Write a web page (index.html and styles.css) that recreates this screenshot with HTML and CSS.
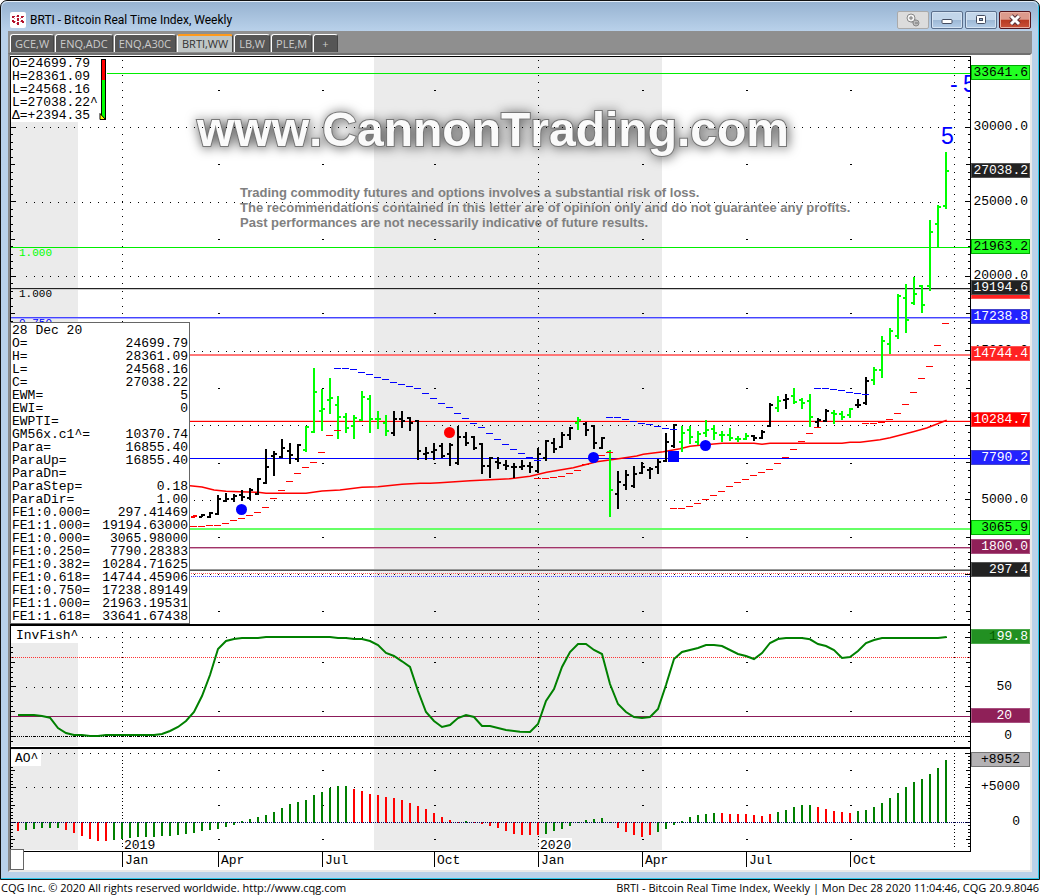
FILE: index.html
```html
<!DOCTYPE html>
<html lang="en">
<head>
<meta charset="utf-8">
<title>BRTI - Bitcoin Real Time Index, Weekly</title>
<link rel="stylesheet" href="styles.css">
</head>
<body>
<main class="window">
  <header class="titlebar">
    <svg class="logo" width="16" height="16" viewBox="0 0 16 16" aria-hidden="true">
      <rect width="16" height="16" rx="2" fill="#fff"/>
      <path fill="#b3122b" d="M2 4h3v1H4v1H2zM7 3h2v2H7zM11 4h3v1h-1v1h-2zM2 8h2v1h1v2H3v-1H2zM7 6h2v3H7zM11 8h2v1h1v2h-2v-1h-1zM7 10h2v3H7z"/>
      <path fill="#e58a98" d="M4 6h1v1H4zM6 4h1v1H6zM10 6h1v1h-1zM5 9h1v1H5zM10 9h1v1h-1zM6 11h1v1H6z"/>
    </svg>
    <h1 class="title">BRTI - Bitcoin Real Time Index, Weekly</h1>
    <div class="controls">
      <button class="ctl ctl-link" type="button" aria-label="Link windows">
        <svg width="16" height="14" viewBox="0 0 16 14"><path d="M6 3l7 5-3 4-6-4z" fill="#aaa"/><circle cx="11" cy="10" r="3" fill="#bbb" stroke="#888"/><circle cx="6" cy="5" r="4" fill="#f4f4f4" stroke="#888"/><path d="M4 5h4M6 3v4M10 10h3" stroke="#777"/></svg>
      </button>
      <button class="ctl" type="button" aria-label="Minimize">
        <svg width="14" height="12" viewBox="0 0 14 12"><rect x="2" y="5.500" width="10" height="4" rx="1" fill="#fff" stroke="#444c60"/></svg>
      </button>
      <button class="ctl" type="button" aria-label="Maximize">
        <svg width="14" height="12" viewBox="0 0 14 12"><rect x="2.500" y="1.500" width="9" height="8" rx="1" fill="#fff" stroke="#444c60"/><rect x="5.500" y="4.500" width="3" height="2" fill="#8fb0d0" stroke="#444c60"/></svg>
      </button>
      <button class="ctl ctl-close" type="button" aria-label="Close">
        <svg width="14" height="12" viewBox="0 0 14 12"><path d="M3 2l8 8M11 2l-8 8" stroke="#5a3038" stroke-width="5"/><path d="M3 2l8 8M11 2l-8 8" stroke="#fff" stroke-width="3"/></svg>
      </button>
    </div>
  </header>

  <nav class="tabs" aria-label="Charts">
    <button class="tab" type="button">GCE,W</button>
    <button class="tab" type="button">ENQ,ADC</button>
    <button class="tab" type="button">ENQ,A30C</button>
    <button class="tab tab-active" type="button" aria-current="page">BRTI,WW</button>
    <button class="tab" type="button">LB,W</button>
    <button class="tab" type="button">PLE,M</button>
    <button class="tab tab-add" type="button" aria-label="Add chart">+</button>
  </nav>

  <div class="charts">
    <section class="pane">
      <svg class="plot" viewBox="10 55 1020 571" role="img" aria-label="Weekly price chart">
        <defs>
          <clipPath id="plot-clip"><rect x="10" y="55" width="960" height="571"/></clipPath>
        </defs>
        <rect class="band" x="11" y="122" width="67" height="502"/>
        <rect class="band" x="374" y="57" width="288" height="567"/>
        <text class="brand" x="197" y="146">www.CannonTrading.com</text>
        <text class="notice" x="240" y="197">Trading commodity futures and options involves a substantial risk of loss.</text>
        <text class="notice" x="240" y="212">The recommendations contained in this letter are of opinion only and do not guarantee any profits.</text>
        <text class="notice" x="240" y="227">Past performances are not necessarily indicative of future results.</text>
        <g id="price-grid" class="crisp"></g>
        <g id="price-levels" class="crisp"></g>
        <polyline id="average" class="average"/>
        <g id="price-bars" class="crisp"></g>
        <g id="parabolic" class="crisp"></g>
        <circle cx="241.500" cy="509.500" r="5.500" fill="#00f"/>
        <circle cx="449.500" cy="432.500" r="5.500" fill="#f00"/>
        <circle cx="593.500" cy="457.500" r="5.500" fill="#00f"/>
        <circle cx="705.500" cy="445.500" r="5.500" fill="#00f"/>
        <rect x="668" y="451" width="11" height="11" fill="#00f"/>
        <g class="level-label">
          <text x="19" y="256" fill="#0f0">1.000</text>
          <text x="19" y="297">1.000</text>
          <text x="19" y="326" fill="#00f">0.750</text>
        </g>
        <g class="wave" clip-path="url(#plot-clip)">
          <text x="941" y="144">5</text>
          <text x="950" y="92">-</text>
          <text x="963" y="92">5</text>
        </g>
        <path class="frame" d="M10 56h961v1H10zM10 56h1v570h-1zM970 56h1v570h-1zM10 624h960v2H10z"/>
        <g id="price-tags"></g>
      </svg>
      <div class="readout">
        <div>O=24699.79</div>
        <div>H=28361.09</div>
        <div>L=24568.16</div>
        <div>L=27038.22^</div>
        <div>Δ=+2394.35</div>
        <svg class="range" width="8" height="62" viewBox="0 0 8 62" aria-hidden="true">
          <path fill="#000" d="M2 0h5v61H2z"/><path fill="#f00" d="M3 1h3v20H3z"/><path fill="#0f0" d="M3 21h3v39H3z"/>
          <path fill="#ff0" stroke="#000" d="M1 54.500v6h5.500z"/>
        </svg>
      </div>
      <table class="values" aria-label="Cursor values">
        <tbody>
          <tr><th colspan="2">28 Dec 20</th></tr>
          <tr><th>O=</th><td>24699.79</td></tr>
          <tr><th>H=</th><td>28361.09</td></tr>
          <tr><th>L=</th><td>24568.16</td></tr>
          <tr><th>C=</th><td>27038.22</td></tr>
          <tr><th>EWM=</th><td>5</td></tr>
          <tr><th>EWI=</th><td>0</td></tr>
          <tr><th>EWPTI=</th><td></td></tr>
          <tr><th>GM56x.c1^=</th><td>10370.74</td></tr>
          <tr><th>Para=</th><td>16855.40</td></tr>
          <tr><th>ParaUp=</th><td>16855.40</td></tr>
          <tr><th>ParaDn=</th><td></td></tr>
          <tr><th>ParaStep=</th><td>0.18</td></tr>
          <tr><th>ParaDir=</th><td>1.00</td></tr>
          <tr><th>FE1:0.000=</th><td>297.41469</td></tr>
          <tr><th>FE1:1.000=</th><td>19194.63000</td></tr>
          <tr><th>FE1:0.000=</th><td>3065.98000</td></tr>
          <tr><th>FE1:0.250=</th><td>7790.28383</td></tr>
          <tr><th>FE1:0.382=</th><td>10284.71625</td></tr>
          <tr><th>FE1:0.618=</th><td>14744.45906</td></tr>
          <tr><th>FE1:0.750=</th><td>17238.89149</td></tr>
          <tr><th>FE1:1.000=</th><td>21963.19531</td></tr>
          <tr><th>FE1:1.618=</th><td>33641.67438</td></tr>
        </tbody>
      </table>
    </section>

    <section class="pane">
      <svg class="plot" viewBox="10 626 1020 123" role="img" aria-label="InvFish oscillator">
        <rect class="band" x="11" y="643" width="67" height="103"/>
        <rect class="band" x="374" y="626" width="288" height="120"/>
        <g id="fish-grid" class="crisp"></g>
        <path class="dotted" stroke="#f33" d="M11 657.500H970"/>
        <path class="dotted" stroke="#000" d="M11 736.500H970"/>
        <path class="crisp" stroke="#8b1a5a" d="M11 716.500H970"/>
        <polyline id="fish-line" class="fish"/>
        <rect x="11" y="627" width="70" height="16" fill="#fff"/>
        <text class="mono" x="16" y="639">InvFish^</text>
        <path class="frame" d="M10 626h1v123h-1zM970 626h1v123h-1zM10 747h960v2H10z"/>
        <g id="fish-tags"></g>
      </svg>
    </section>

    <section class="pane">
      <svg class="plot" viewBox="10 749 1020 121" role="img" aria-label="Awesome oscillator">
        <rect class="band" x="11" y="749" width="67" height="101"/>
        <rect class="band" x="374" y="749" width="288" height="101"/>
        <g id="ao-grid" class="crisp"></g>
        <g id="ao-bars" class="crisp"></g>
        <path class="dotted" stroke="#000060" d="M11 822.500H970"/>
        <rect x="11" y="750" width="30" height="16" fill="#fff"/>
        <text class="mono" x="15" y="762">AO^</text>
        <rect x="123" y="838" width="33" height="12" fill="#fff"/>
        <rect x="539" y="838" width="33" height="12" fill="#fff"/>
        <text class="mono" x="124" y="849">2019</text>
        <text class="mono" x="540" y="849">2020</text>
        <path class="frame" d="M10 749h1v118h-1zM970 749h1v103h-1zM10 851h961v1H10z"/>
        <g id="time-axis"></g>
        <rect x="10.500" y="849.500" width="13" height="20" fill="#fff" stroke="#666"/>
        <g id="ao-tags"></g>
      </svg>
    </section>
  </div>
</main>
<footer class="status">
  <span>CQG Inc. © 2020 All rights reserved worldwide. <a href="http://www.cqg.com">http://www.cqg.com</a></span>
  <span>BRTI - Bitcoin Real Time Index, Weekly | Mon Dec 28 2020 11:04:46, CQG 20.9.8046</span>
</footer>
<script src="chart.js"></script>
</body>
</html>
```
FILE: styles.css
```css
* { box-sizing: border-box; }

body {
  margin: 0;
  background: #fff;
  color: #000;
  font-family: "Open Sans", "Noto Sans", sans-serif;
  font-size: 11px;
}

.window {
  padding: 0 7px 7px;
  border: 1px solid #111;
  border-radius: 7px 7px 0 0;
  background: #b9d1ea;
  box-shadow: inset -1px -1px 0 #2cc8ec;
}

.titlebar {
  display: flex;
  align-items: center;
  gap: 4px;
  height: 30px;
  margin: 0 -6px;
  padding: 6px 7px 0 8px;
  border-radius: 6px 6px 0 0;
  border-top: 1px solid #e4eef8;
  background: linear-gradient(#97b3d1, #b9d1ea);
}

.title {
  flex: 1;
  margin: 0;
  font-family: Roboto, "Open Sans", sans-serif;
  font-size: 12px;
  font-weight: 400;
}

.controls { display: flex; gap: 2px; }

.ctl {
  display: flex;
  align-items: center;
  justify-content: center;
  width: 32px;
  height: 18px;
  padding: 0;
  border: 1px solid #5b6f8c;
  border-radius: 2px;
  background: linear-gradient(#c3d6ea 48%, #9db8d5 52%, #b4cde8);
  box-shadow: inset 0 0 0 1px #d5e3f2;
}
.ctl-link { border-color: #aaa; background: #dcdcdc; box-shadow: none; }
.ctl-close {
  border-color: #52141c;
  background: linear-gradient(#dc9a8c 45%, #b83a22 52%, #c9523a);
  box-shadow: inset 0 0 0 1px #e8b0a4;
}

.tabs {
  display: flex;
  align-items: flex-end;
  gap: 1px;
  height: 22px;
  padding-bottom: 1px;
  border-left: 2px solid #8f8f8f;
  background: #8f8f8f;
}
.tab {
  height: 18px;
  padding: 0 4px;
  border: solid #fff;
  border-width: 1px 1px 0;
  border-right-color: #444;
  border-radius: 3px 3px 0 0;
  background: #565656;
  color: #ccc;
  font: 11px/16px "Open Sans", "Noto Sans", sans-serif;
}
.tab-active { border-top: 2px solid #ff9a1c; background: #c0c6c6; color: #333; }
.tab-add { padding: 0 8px; }

.charts {
  border: 2px solid #8a8a8a;
  border-top-color: #707070;
  border-right-color: #e8e8e8;
  border-bottom-color: #e8e8e8;
  background: #fff;
}
.pane { position: relative; }
.plot { display: block; width: 100%; height: auto; }

.mono, .tag, .readout, .values, .level-label {
  font-family: "Liberation Mono", monospace;
  font-size: 13px;
}
.level-label { font-size: 11px; }
.tag { text-anchor: end; }
.crisp { shape-rendering: crispEdges; }
.band { fill: #ebebeb; }
.frame { fill: #000; shape-rendering: crispEdges; }
.dotted { stroke-dasharray: 1 1; shape-rendering: crispEdges; }
.average { fill: none; stroke: #f00; stroke-width: 1.5; }
.fish { fill: none; stroke: #008000; stroke-width: 2; }

.brand {
  font-family: "Liberation Sans", Arial, sans-serif;
  font-size: 48px;
  font-weight: 700;
  font-kerning: none;
  fill: #fafafa;
  stroke: #777;
  stroke-width: 2;
  paint-order: stroke;
  filter: drop-shadow(1px 1px 6px #555);
}
.notice {
  font-family: "Liberation Sans", Arial, sans-serif;
  font-size: 13px;
  font-weight: 700;
  fill: #808080;
}
.wave {
  font-family: "Liberation Sans", Arial, sans-serif;
  font-size: 23px;
  fill: #00f;
}

.readout {
  position: absolute;
  top: 2px;
  left: 1px;
  width: 96px;
  height: 65px;
  padding-left: 1px;
  background: #fff;
  line-height: 13px;
}
.range { position: absolute; top: 2px; right: 0; }

.values {
  position: absolute;
  top: 267px;
  left: 0;
  width: 180px;
  padding-top: 1px;
  border: 1px solid #666;
  border-collapse: separate;
  border-spacing: 0;
  background: #fff;
  line-height: 13px;
}
.values th, .values td { height: 13px; padding: 0 1px; font-weight: 400; text-align: left; }
.values td { text-align: right; }

.status {
  display: flex;
  justify-content: space-between;
  padding: 0 1px;
  line-height: 16px;
}
.status a { color: inherit; text-decoration: none; }
```
FILE: chart.js
```js
const SVG_NS = "http://www.w3.org/2000/svg";
const STEP = 8;
const COLORS = { k: "#000", g: "#0f0", r: "#f00" };

function add(parentId, name, attrs, text) {
  const el = document.createElementNS(SVG_NS, name);
  for (const key in attrs) el.setAttribute(key, attrs[key]);
  if (text) el.textContent = text;
  document.getElementById(parentId).appendChild(el);
  return el;
}
const dot = (x, y, w = 1, h = 1) => `M${Math.floor(x)} ${Math.floor(y)}h${w}v${h}h${-w}z`;

/* Dotted grid plus ruler ticks on both edges of a pane. */
const QUARTERS = [218, 322, 434, 642, 746, 850];
function grid(id, rows, mids, top, bottom, zero, step, perMajor) {
  let d = "";
  for (const y of rows) for (let x = 26; x < 954; x += STEP) d += dot(x, y);
  for (const y of mids) for (const x of QUARTERS) d += dot(x, y, 2);
  const first = Math.ceil((zero - bottom) / step);
  for (let n = first; zero - n * step > top; n++) {
    const y = zero - n * step;
    for (const x of [122, 538, 954]) d += dot(x, y);
    const len = n % perMajor === 0 ? 5 : n % (perMajor / 2) === 0 ? 4 : 2;
    d += dot(11, y, len) + dot(970 - len, y, len);
  }
  add(id, "path", { d, fill: "#000" });
}
grid("price-grid", [127, 202, 276, 351, 425, 500, 574], [90, 164, 239, 313, 388, 463, 537, 611], 58, 622, 574.4, 7.45, 10);
grid("fish-grid", [637, 687, 736], [662, 711], 630, 746, 736.4, 4.95, 10);
grid("ao-grid", [753, 787, 822], [770, 805, 839], 751, 849, 822.4, 3.45, 10);

/* Horizontal levels: row, height, colour, left edge. */
[
  [73, 1, "#0e0", 107], [247, 1, "#0e0", 11],
  [288, 1, "#222", 11], [289, 1, "#ccc", 11],
  [317, 1, "#44f", 11], [318, 1, "#aaf", 11],
  [354, 2, "#f77", 11], [420, 1, "#fcc", 11], [421, 1, "#f00", 11],
  [458, 1, "#00f", 11], [528, 2, "#6f6", 11],
  [547, 1, "#a03468", 11], [548, 1, "#d8a8c0", 11],
  [569, 1, "#999", 11], [570, 1, "#555", 11]
].forEach(([y, height, fill, x]) => add("price-levels", "rect", { x, y, width: 970 - x, height, fill }));
add("price-levels", "path", { d: "M11 573.5H970", stroke: "#f55", "stroke-dasharray": "1 1" });
add("price-levels", "path", { d: "M11 576.5H970", stroke: "#44f", "stroke-dasharray": "1 1" });

/* Weekly bars: colour, high, low, open, close in thirds of a unit below the group's origin. */
const BARS = [
  [194, 340, `r526 534 530 528,k522 532 530 525,k516 533 531 519,k465 524 521 477,k459 486 483 477,k462 485 477 468,
   k450 483 465 470,k444 481 475 449,k414 464 461 416,k327 431 428 381,k333 407 348 342,k297 354 350 323,
   k309 371 333 345,k312 367 358 315,g258 337 330 261,g84 278 275 156,g147 272 212 207,g114 223 180 174,
   g168 298 194 231,g219 278 231 264,g225 296 258 234,g153 242 240 171,g165 280 177 237,g213 268 236 237,
   g225 287 248 272,k213 287 279 237,k213 264 237 242,k231 272 234 249,k240 359 243 333,k321 360 342 340,
   k309 359 335 330,k309 354 318 348`],
  [450, 380, `k189 257 222 194,k138 254 249 171,k156 197 171 189,k168 209 171 204,k189 281 192 258,k231 293 258 234,
   k231 266 245 248,k240 269 254 258,k249 295 261 261,k240 269 261 258,k246 278 258 261,k204 278 273 222,
   k180 242 235 184,k174 218 189 206,k156 203 200 165,k142 179 164 144,g111 149 130 120,k126 167 132 149,
   k135 206 138 189,k171 207 204 173,g210 410 216 330,k273 386 342 306,k270 329 315 285,k258 323 317 282,
   k246 281 278 262,k261 296 270 266,k236 282 261 246,k159 245 242 186,k132 203 198 135,g138 217 186 158`],
  [690, 260, `g498 551 510 531,g513 556 545 522,g480 530 519 510,g495 539 506 519,g513 545 525 525,g504 542 525 534,
   g528 545 537 537,g519 539 536 528,k525 542 527 534,k510 536 534 516,k429 500 498 435,g408 455 444 423,
   k402 446 420 417,g384 431 408 426,g414 446 420 429,g402 500 422 471,k474 500 486 480,k447 485 483 453,
   g450 491 458 462,g453 479 462 470,g444 473 464 447,k417 443 435 435,k351 434 429 362,g321 374 360 330,
   g228 353 330 243,g204 282 252 213,g102 236 228 108,g72 218 114 180,g51 134 129 102,g75 158 78 135`],
  [930, 100, `g360 573 558 396,g315 442 372 321,g156 326 318 213`]
];
for (const [x0, y0, rows] of BARS) {
  rows.split(",").forEach((row, i) => {
    const r = row.trim();
    const [high, low, open, close] = r.slice(1).split(" ").map(v => Math.round(y0 + v / 3));
    const x = x0 + i * STEP;
    const d = `M${x} ${high}V${low}M${x - 3} ${open}H${x}M${x} ${close}H${x + 3}`;
    add("price-bars", "path", { d, stroke: COLORS[r[0]], "stroke-width": 2 });
  });
}

/* Parabolic stops: colour, first x, y origin, offsets in thirds. */
[
  ["#f00", 194, 340, [559, 559, 556, 556, 550, 541, 535, 526, 517, 502, 475, 451, 424, 400, 382, 367, 337, 286, 271]],
  ["#00f", 338, 340, [85, 85, 88, 97, 103, 112, 118, 127, 133, 139, 145, 160, 175, 190, 202, 220, 235, 250, 262, 280, 298, 313, 328, 340, 352, 361]],
  ["#f00", 538, 380, [295, 295, 292, 289, 280, 271, 253, 241, 226, 217]],
  ["#00f", 610, 380, [112, 112, 118, 124, 130, 133, 139, 145, 148]],
  ["#f00", 674, 260, [745, 745, 739, 730, 718, 706, 694, 679, 667, 658, 646, 637, 628, 610, 592, 568, 544, 520, 502]],
  ["#00f", 818, 260, [385, 385, 388, 391, 397, 400, 403]],
  ["#f00", 866, 260, [490, 490, 487, 478, 460, 433, 397, 355, 319, 256, 190]]
].forEach(([fill, x0, y0, ys]) => {
  const d = ys.map((y, i) => dot(x0 + i * STEP - 4, y0 + y / 3, 7)).join("");
  add("parabolic", "path", { d, fill });
});

/* Curves are lists of x,y offsets in thirds from an origin. */
function points(x0, y0, list) {
  return list.split(" ").map(p => {
    const [x, y] = p.split(",");
    return (x0 + x / 3).toFixed(1) + "," + (y0 + y / 3).toFixed(1);
  }).join(" ");
}
document.getElementById("average").setAttribute("points", [
  points(190, 340, "0,437 36,441 72,450 108,454 150,455 204,457 228,460 348,460 396,453 450,450 516,442 564,440 636,433 690,430"),
  points(430, 380, "0,310 30,308 120,302 180,299 240,296 300,289 350,277 430,263 500,245 560,237 620,228 640,223 700,215"),
  points(680, 260, "0,566 30,559 60,556 126,550 222,550 246,553 270,550 486,550 510,547 540,547 600,539 630,533 700,515 740,504 800,481")
].join(" "));
document.getElementById("fish-line").setAttribute("points", [
  points(0, 620, "54,285 102,285 126,288 150,293 174,324 198,339 222,345 246,345 270,348 294,348 318,345 462,345 486,342 510,333 534,321 558,303 582,276 606,228 630,165 654,87 678,63 702,57 726,54 774,54 798,51 990,51 1014,54 1038,54 1062,57 1086,57 1110,63 1134,75 1158,99 1182,108 1206,124 1230,141 1254,213 1278,276 1302,303 1326,321 1350,315 1374,294 1398,285 1422,291 1446,318 1470,318 1518,330"),
  points(520, 620, "0,335 30,336 54,312 78,243 102,207 126,141 150,96 174,72 198,72 222,90 246,102 270,192 294,252 318,276 342,291 366,294 390,291 414,267 438,195 462,117 486,96 534,84 558,75 582,75 606,78 654,102 678,108 702,117 726,99 750,69 774,57 798,54 846,54 870,58 894,72 918,78 942,90 966,114 990,111 1014,93 1038,69 1062,60 1086,54 1254,54 1280,51")
].join(" "));

/* Histogram runs of one colour; offsets in thirds, zero line at 607. */
const AO = [
  ["r", 632], ["g", 629, 626, 624, 624, 624], ["r", 629, 638, 647, 656, 662, 662],
  ["g", 659, 656, 653, 650, 650, 650, 647, 647, 644, 641, 638, 632, 629, 626, 620, 614, 603, 597, 591, 585, 576, 564, 552, 546, 540, 525, 516, 504, 498, 498],
  ["r", 507, 513, 522, 525, 531, 534, 540, 549, 558, 567, 579, 591, 600, 606], ["g", 603],
  ["r", 609, 612, 617, 623, 632, 641, 644, 644, 644],
  ["g", 641, 632, 626, 617, 606, 600, 597, 594, 606], ["r", 623, 635, 644, 650, 644],
  ["g", 635, 626, 614, 603, 591, 585, 582, 579], ["r", 579, 582, 582, 582, 585, 588, 582],
  ["g", 576, 570, 561, 555, 555], ["r", 561, 567, 573, 576, 579],
  ["g", 573, 570, 561, 549, 534, 519, 501, 486, 477, 462, 444, 420]
];
let barX = 18;
for (const [color, ...values] of AO) {
  for (const v of values) {
    const end = Math.round(620 + v / 3);
    const top = Math.min(end, 822);
    add("ao-bars", "rect", { x: barX - 1, y: top, width: 2, height: Math.max(1, Math.max(end, 823) - top), fill: color === "g" ? "#008000" : "#f00" });
    barX += STEP;
  }
}

/* Axis values: group, text, right edge, baseline, then tag fill, text colour, border. */
[
  ["price-tags", "30000.0", 1028, 130], ["price-tags", "25000.0", 1028, 205], ["price-tags", "20000.0", 1028, 279],
  ["price-tags", "15000.0", 1028, 354], ["price-tags", "5000.0", 1028, 503],
  ["price-tags", "33641.6", 1028, 76, "#2f2", "#000", "#0a0"],
  ["price-tags", "27038.2", 1028, 174, "#222", "#fff", "#555"],
  ["price-tags", "21963.2", 1028, 250, "#2f2", "#000", "#0a0"],
  ["price-tags", "", 1028, 295, "#f22", "#fff", "#f55"],
  ["price-tags", "19194.6", 1028, 291, "#222", "#fff", "#555"],
  ["price-tags", "17238.8", 1028, 320, "#22f", "#fff", "#44c"],
  ["price-tags", "14744.4", 1028, 357, "#f22", "#fff", "#f55"],
  ["price-tags", "10284.7", 1028, 423, "#f00", "#fff", "#f44"],
  ["price-tags", "7790.2", 1028, 461, "#22f", "#fff", "#44c"],
  ["price-tags", "3065.9", 1028, 531, "#2f2", "#000", "#0a0"],
  ["price-tags", "1800.0", 1028, 550, "#8f2058", "#fff", "#a85080"],
  ["price-tags", "297.4", 1028, 573, "#222", "#fff", "#555"],
  ["fish-tags", "199.8", 1028, 640, "#229022", "#fff", "#4aa84a"],
  ["fish-tags", "50", 1012, 690],
  ["fish-tags", "20", 1012, 719, "#8f2058", "#fff", "#a85080"],
  ["fish-tags", "0", 1012, 739],
  ["ao-tags", "+8952", 1020, 763, "#b4b2b4", "#000", "#777"],
  ["ao-tags", "+5000", 1020, 790], ["ao-tags", "0", 1020, 825]
].forEach(([id, text, x, y, fill, color = "#000", stroke]) => {
  if (fill) add(id, "rect", { x: 971.5, y: y - 10.5, width: 58, height: 14, fill, stroke });
  if (text === "199.8") {
    const label = add(id, "text", { x, y, class: "tag", fill: color });
    label.innerHTML = '<tspan fill="#006000">1</tspan>99.8';
  } else if (text) {
    add(id, "text", { x, y, class: "tag", fill: color }, text);
  }
});

["Jan", "Apr", "Jul", "Oct", "Jan", "Apr", "Jul", "Oct"].forEach((month, i) => {
  const x = [122, 218, 322, 434, 538, 642, 746, 850][i];
  add("time-axis", "rect", { x, y: 852, width: 1, height: 15 });
  add("time-axis", "text", { x: x + 3, y: 864, class: "mono" }, month);
});
```
